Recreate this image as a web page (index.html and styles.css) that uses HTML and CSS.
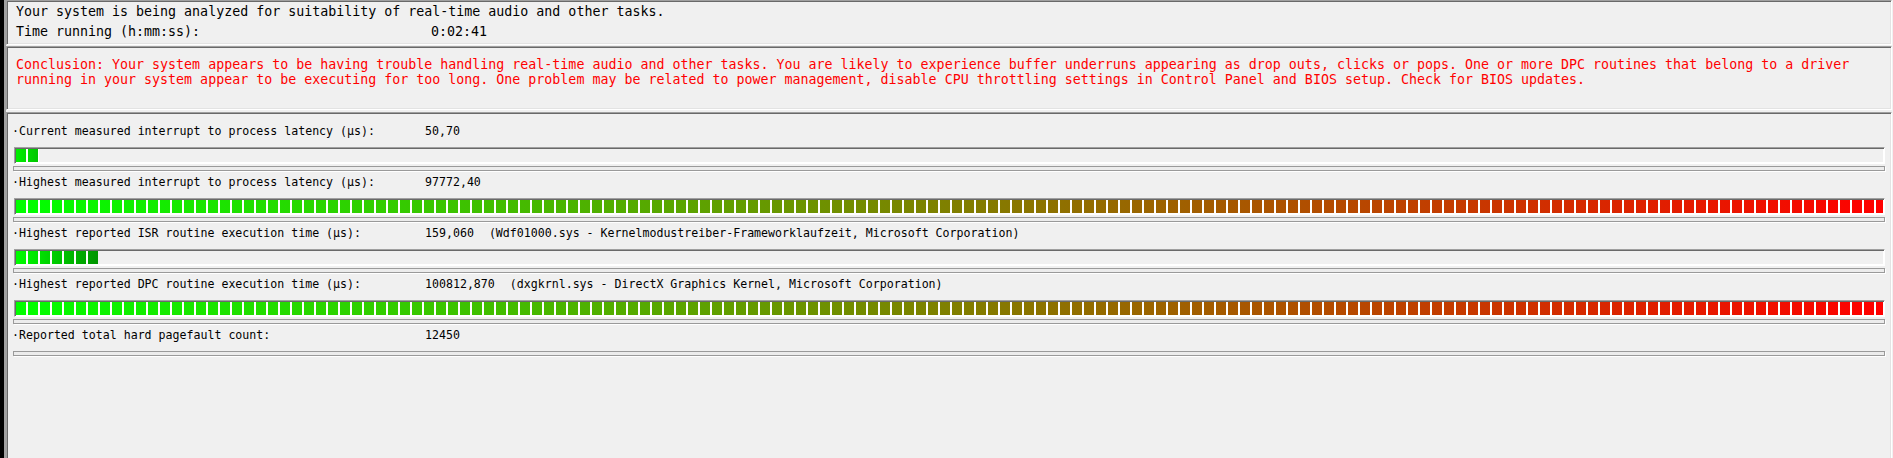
FILE: index.html
```html
<!DOCTYPE html>
<html lang="en">
<head>
<meta charset="utf-8">
<title>Latency Checker</title>
<link rel="stylesheet" href="styles.css">
</head>
<body>
<div class="app">
  <div class="frame">
    <section class="panel status">
      <div class="tx">Your system is being analyzed for suitability of real-time audio and other tasks.</div>
      <div class="tx kv"><span class="k1">Time running (h:mm:ss):</span><span>0:02:41</span></div>
    </section>
    <section class="panel conclusion">
      <p class="tx">Conclusion: Your system appears to be having trouble handling real-time audio and other tasks. You are likely to experience buffer underruns appearing as drop outs, clicks or pops. One or more DPC routines that belong to a driver<br>running in your system appear to be executing for too long. One problem may be related to power management, disable CPU throttling settings in Control Panel and BIOS setup. Check for BIOS updates.</p>
    </section>
    <section class="panel metrics">
      <div class="row">
        <div class="tx kv lbl"><span class="k2">·Current measured interrupt to process latency (µs):</span><span>50,70</span></div>
        <div class="bar"><div class="fill fill-cur"></div></div>
        <div class="track"></div>
      </div>
      <div class="row">
        <div class="tx kv lbl"><span class="k2">·Highest measured interrupt to process latency (µs):</span><span>97772,40</span></div>
        <div class="bar"><div class="fill fill-full"></div></div>
        <div class="track"></div>
      </div>
      <div class="row">
        <div class="tx kv lbl"><span class="k2">·Highest reported ISR routine execution time (µs):</span><span>159,060</span><span class="desc">(Wdf01000.sys - Kernelmodustreiber-Frameworklaufzeit, Microsoft Corporation)</span></div>
        <div class="bar"><div class="fill fill-isr"></div></div>
        <div class="track"></div>
      </div>
      <div class="row">
        <div class="tx kv lbl"><span class="k2">·Highest reported DPC routine execution time (µs):</span><span>100812,870</span><span class="desc">(dxgkrnl.sys - DirectX Graphics Kernel, Microsoft Corporation)</span></div>
        <div class="bar"><div class="fill fill-full"></div></div>
        <div class="track"></div>
      </div>
      <div class="row last">
        <div class="tx kv lbl"><span class="k2">·Reported total hard pagefault count:</span><span>12450</span></div>
        <div class="track"></div>
      </div>
    </section>
  </div>
</div>
</body>
</html>
```
FILE: styles.css
```css
html, body {
  margin: 0;
  height: 100%;
}

body {
  background: #f0f0f0;
  font-family: "DejaVu Sans Mono", "Liberation Mono", monospace;
  font-size: 13.3px;
  color: #000;
  overflow: hidden;
}

.app {
  height: 100vh;
  box-sizing: border-box;
  border-left: 4px solid #000;
  display: flex;
}

.frame {
  flex: 1;
  border-left: 2px solid #a0a0a0;
  margin-right: 1px;
  display: flex;
  flex-direction: column;
}

.panel {
  box-sizing: border-box;
  border: 1px solid;
  border-color: #a0a0a0 #fff #fff #a0a0a0;
  box-shadow: inset 1px 1px 0 #696969, inset -1px -1px 0 #e3e3e3;
}

.tx {
  white-space: pre;
}

.kv {
  display: flex;
}

.status {
  height: 45px;
  padding: 1px 6px 2px 9px;
  line-height: 20px;
}

.k1 {
  width: 415px;
  flex: none;
}

.conclusion {
  margin-top: 1px;
  height: 64px;
  padding: 10px 6px 0 9px;
  line-height: 15px;
  color: #f00;
}

.conclusion p {
  margin: 0;
}

.metrics {
  margin-top: 2px;
  flex: 1;
  padding: 10px 6px 0 5px;
  font-size: 11.6px;
  border-bottom-width: 0;
  box-shadow: inset 1px 1px 0 #696969, inset -1px 0 0 #e3e3e3;
}

.row {
  padding-bottom: 3px;
}

.lbl {
  line-height: 16px;
}

.k2 {
  width: 413px;
  flex: none;
}

.desc {
  margin-left: 15px;
}

.bar {
  margin: 8px 0 0 2px;
  height: 13px;
  padding: 1px;
  border: 1px solid;
  border-color: #a0a0a0 #fff #fff #a0a0a0;
  box-shadow: inset 1px 1px 0 #696969, inset -1px -1px 0 #fff;
}

.fill {
  height: 100%;
}

.fill-full {
  background:
    repeating-linear-gradient(90deg, transparent 0 10px, #fff 10px 12px),
    linear-gradient(90deg, #00ff00, #ff0000);
}

.fill-cur {
  width: 23px;
  background:
    repeating-linear-gradient(90deg, transparent 0 10px, #fff 10px 12px),
    linear-gradient(90deg, #00f000, #00c400);
}

.fill-isr {
  width: 82px;
  background:
    repeating-linear-gradient(90deg, transparent 0 10px, #fff 10px 12px),
    linear-gradient(90deg, #00ff00, #009400);
}

.track {
  margin: 2px 0 0 1px;
  height: 3px;
  border: 1px solid #9a9a9a;
  background: #ececec;
  box-shadow: 1px 1px 0 #fff;
}

.last .track {
  margin-top: 8px;
}
```
